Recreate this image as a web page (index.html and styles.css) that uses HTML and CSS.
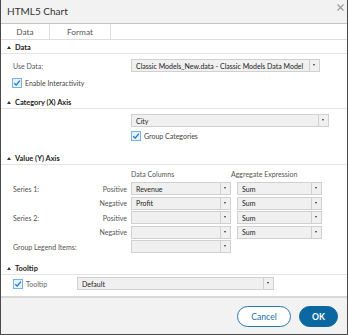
FILE: index.html
```html
<!DOCTYPE html>
<html>
<head>
<meta charset="utf-8">
<link rel="stylesheet" href="styles.css">
</head>
<body>
<div class="dialog">
  <div class="titlebar">
    <span class="title">HTML5 Chart</span>
    <svg class="close" width="7" height="7" viewBox="0 0 7 7"><path d="M0.5 0.5L6.5 6.5M6.5 0.5L0.5 6.5" stroke="#999" stroke-width="1.1"/></svg>
  </div>
  <div class="tabs">
    <div class="tab active">Data</div>
    <div class="tab">Format</div>
  </div>
  <div class="content">
    <div class="section-head"><span class="tri"></span>Data</div>
    <div class="row r-usedata">
      <span class="lbl lbl-wide">Use Data:</span>
      <div class="select w-usedata"><span class="val">Classic Models_New.data - Classic Models Data Model</span><span class="arrow"></span></div>
    </div>
    <div class="row r-check">
      <span class="cb"><svg width="8" height="8" viewBox="0 0 8 8"><path d="M1.3 4.2L3.2 6.1L6.8 1.6" fill="none" stroke="#1976d2" stroke-width="1.3"/></svg></span>
      <span class="cb-lbl">Enable Interactivity</span>
    </div>

    <div class="section-head sh2"><span class="tri"></span>Category (X) Axis</div>
    <div class="row r-city">
      <div class="select w-city"><span class="val">City</span><span class="arrow"></span></div>
    </div>
    <div class="row r-group">
      <span class="cb"><svg width="8" height="8" viewBox="0 0 8 8"><path d="M1.3 4.2L3.2 6.1L6.8 1.6" fill="none" stroke="#1976d2" stroke-width="1.3"/></svg></span>
      <span class="cb-lbl">Group Categories</span>
    </div>

    <div class="section-head sh3"><span class="tri"></span>Value (Y) Axis</div>
    <div class="vgrid">
      <span></span><span></span><span class="colhead">Data Columns</span><span class="colhead">Aggregate Expression</span>

      <span class="lbl">Series 1:</span><span class="sub">Positive</span>
      <div class="select w-col"><span class="val">Revenue</span><span class="arrow"></span></div>
      <div class="select w-agg"><span class="val">Sum</span><span class="arrow"></span></div>

      <span class="lbl"></span><span class="sub">Negative</span>
      <div class="select w-col"><span class="val">Profit</span><span class="arrow"></span></div>
      <div class="select w-agg"><span class="val">Sum</span><span class="arrow"></span></div>

      <span class="lbl">Series 2:</span><span class="sub">Positive</span>
      <div class="select w-col"><span class="val"></span><span class="arrow"></span></div>
      <div class="select w-agg"><span class="val">Sum</span><span class="arrow"></span></div>

      <span class="lbl"></span><span class="sub">Negative</span>
      <div class="select w-col"><span class="val"></span><span class="arrow"></span></div>
      <div class="select w-agg"><span class="val">Sum</span><span class="arrow"></span></div>

      <span class="lbl">Group Legend Items:</span><span class="sub"></span>
      <div class="select w-col"><span class="val"></span><span class="arrow"></span></div>
      <span></span>
    </div>

    <div class="section-head sh4"><span class="tri"></span>Tooltip</div>
    <div class="row r-tooltip">
      <span class="cb"><svg width="8" height="8" viewBox="0 0 8 8"><path d="M1.3 4.2L3.2 6.1L6.8 1.6" fill="none" stroke="#1976d2" stroke-width="1.3"/></svg></span>
      <span class="cb-lbl tt-lbl">Tooltip</span>
      <div class="select w-tt"><span class="val">Default</span><span class="arrow"></span></div>
    </div>
  </div>
  <div class="footer">
    <button class="btn cancel">Cancel</button>
    <button class="btn ok">OK</button>
  </div>
</div>
</body>
</html>
```
FILE: styles.css
```css
* { box-sizing: border-box; }
html, body { margin: 0; padding: 0; background: #fff; }
body { font-family: Lato, "Open Sans", sans-serif; color: #333; }

.dialog {
  width: 348px;
  height: 335px;
  border-left: 1px solid #4a4a4a;
  border-right: 1px solid #4a4a4a;
  border-bottom: 1px solid #4a4a4a;
  display: flex;
  flex-direction: column;
  background: #fff;
  overflow: hidden;
}
.dialog > * { flex-shrink: 0; }

.titlebar {
  height: 24px;
  background: #f2f2f2;
  border-bottom: 1px solid #c4c4c4;
  display: flex;
  align-items: center;
  padding: 0 4px 1px 6px;
  position: relative;
}
.title { font-size: 10px; color: #333; }
.close { position: absolute; right: 3px; top: 4px; }

.tabs {
  height: 16px;
  display: flex;
  border-bottom: 1px solid #dedede;
}
.tab {
  font-size: 8.3px;
  color: #555;
  border-right: 1px solid #dedede;
  display: flex;
  align-items: center;
  justify-content: center;
  padding-top: 1px;
}
.tab.active { width: 49px; }
.tab + .tab { width: 61px; }

.content { flex: 1 1 auto; display: flex; flex-direction: column; min-height: 0; }
.content > * { flex-shrink: 0; }

.section-head {
  height: 14px;
  border-bottom: 1px solid #e4e4e4;
  font-size: 7.4px;
  font-weight: bold;
  color: #222;
  display: flex;
  align-items: center;
  padding-left: 6px;
  padding-top: 1px;
}
.tri {
  width: 0; height: 0;
  border-left: 2px solid transparent;
  border-right: 2px solid transparent;
  border-bottom: 3px solid #333;
  margin-right: 4px;
}
.sh2 { margin-top: 6px; }
.sh3 { margin-top: 9px; }
.sh4 { margin-top: 7px; }

.row { display: flex; align-items: center; padding-left: 12px; }
.lbl { font-size: 7px; color: #555; }
.lbl-wide { width: 118px; }
.r-usedata { margin-top: 5px; height: 13px; }
.r-check { margin-top: 5px; height: 12px; padding-left: 11px; }
.r-city { margin-top: 5px; height: 13px; padding-left: 130px; }
.r-group { margin-top: 3px; height: 12px; padding-left: 130px; }
.r-tooltip { margin-top: 2px; height: 13px; padding-left: 12px; }

.cb {
  width: 10px; height: 10px;
  border: 1px solid #79b3e6;
  background: #e6f1fb;
  display: flex; align-items: center; justify-content: center;
  margin-right: 3px;
}
.cb-lbl { font-size: 7px; color: #444; }
.tt-lbl { width: 51px; color: #666; }

.select {
  height: 13px;
  background: #f0f0f0;
  border: 1px solid #d0d0d0;
  display: flex;
  align-items: stretch;
}
.select .val { flex: 1; font-size: 7px; color: #222; padding-left: 4px; display: flex; align-items: center; white-space: nowrap; overflow: hidden; }
.select .arrow {
  width: 10px;
  border-left: 1px solid #d0d0d0;
  position: relative;
}
.select .arrow::after {
  content: "";
  position: absolute;
  left: 3px; top: 4px;
  border-left: 1.5px solid transparent;
  border-right: 1.5px solid transparent;
  border-top: 2px solid #333;
}
.w-usedata { width: 189px; }
.w-city { width: 198px; }
.w-col { width: 100px; }
.w-agg { width: 85px; }
.w-tt { width: 197px; }

.vgrid {
  display: grid;
  grid-template-columns: 84px 34px 100px 91px;
  grid-auto-rows: 14.5px;
  padding-left: 12px;
  margin-top: 2px;
  align-items: center;
}
.vgrid > .w-agg { margin-left: 6px; }
.vgrid .sub { font-size: 7px; color: #555; text-align: right; padding-right: 4px; }
.vgrid .lbl { white-space: nowrap; }
.colhead { font-size: 7px; color: #555; }
.vgrid .colhead:last-child { margin-left: 2px; }

.footer {
  height: 38px;
  margin-top: auto;
  background: #f2f2f2;
  border-top: 2px solid #d8d8d8;
  display: flex;
  justify-content: flex-end;
  align-items: center;
  padding-right: 9px;
  padding-top: 1px;
  gap: 8px;
}
.btn {
  font-family: Lato, sans-serif;
  font-size: 8.6px;
  height: 21px;
  border-radius: 11px;
  padding: 0;
}
.cancel { width: 54px; background: #fff; color: #1a6fa3; border: 1px solid #2479ae; }
.ok { width: 39px; background: #0c66a0; color: #fff; border: 1px solid #0c66a0; font-weight: bold; }
```
